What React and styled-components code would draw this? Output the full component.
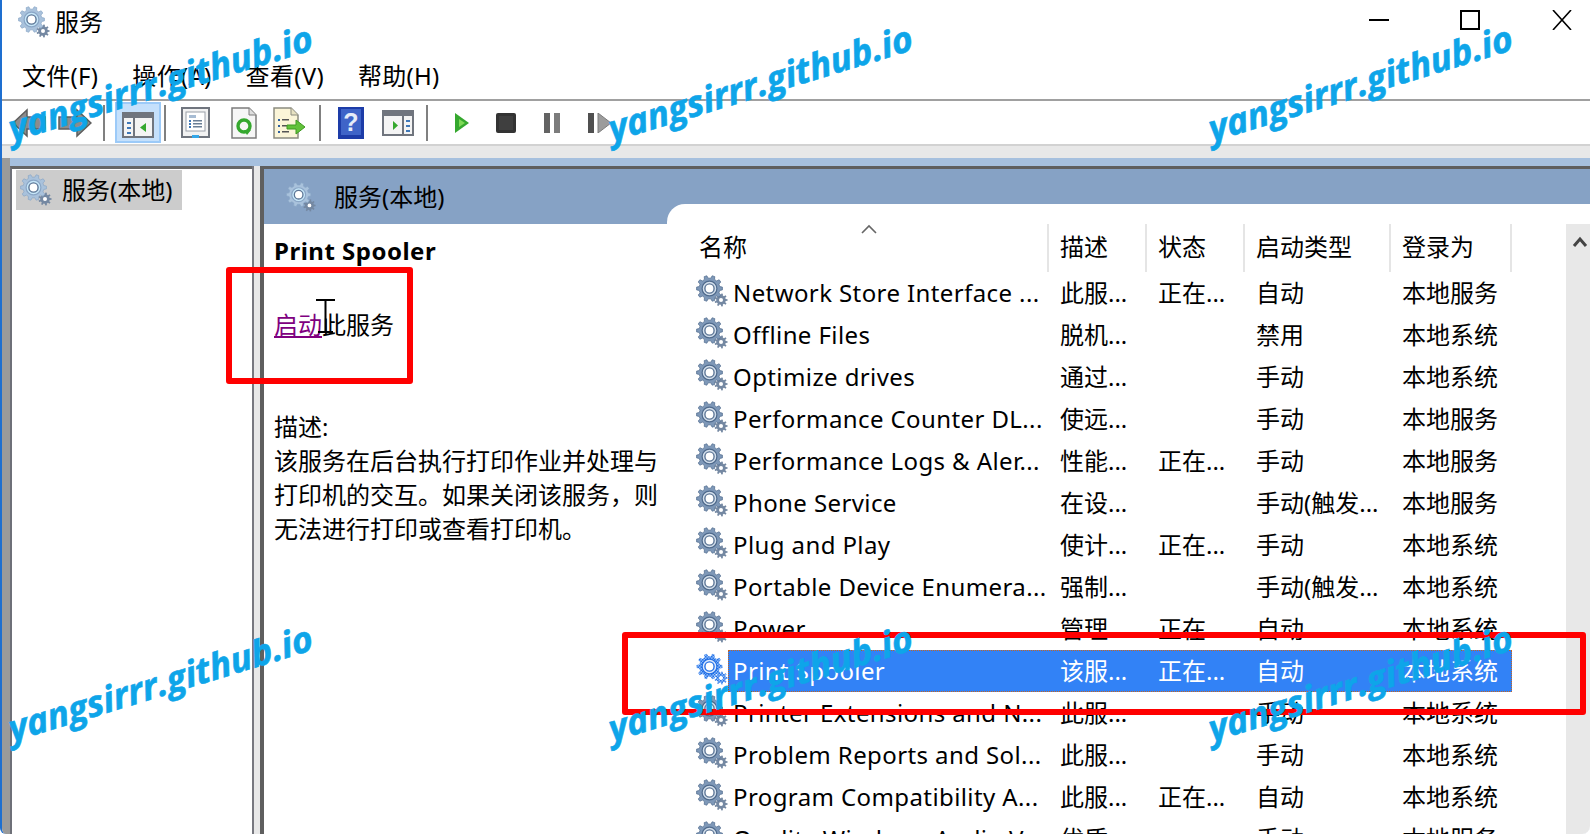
import styled, { createGlobalStyle } from "styled-components"

const GlobalStyle = createGlobalStyle`
    html, body {
        margin: 0;
        padding: 0;
        background: #ffffff;
    }
    body {
        font-family: "Noto Sans", "Noto Sans CJK SC", sans-serif;
        font-size: 24px;
        color: #000000;
    }
`

const rows = [
    ["Network Store Interface ...", "此服...", "正在...", "自动", "本地服务"],
    ["Offline Files", "脱机...", "", "禁用", "本地系统"],
    ["Optimize drives", "通过...", "", "手动", "本地系统"],
    ["Performance Counter DL...", "使远...", "", "手动", "本地服务"],
    ["Performance Logs & Aler...", "性能...", "正在...", "手动", "本地服务"],
    ["Phone Service", "在设...", "", "手动(触发...", "本地服务"],
    ["Plug and Play", "使计...", "正在...", "手动", "本地系统"],
    ["Portable Device Enumera...", "强制...", "", "手动(触发...", "本地系统"],
    ["Power", "管理...", "正在...", "自动", "本地系统"],
    ["Print Spooler", "该服...", "正在...", "自动", "本地系统"],
    ["Printer Extensions and N...", "此服...", "", "手动", "本地系统"],
    ["Problem Reports and Sol...", "此服...", "", "手动", "本地系统"],
    ["Program Compatibility A...", "此服...", "正在...", "自动", "本地系统"],
    ["Quality Windows Audio V...", "优质...", "", "手动", "本地服务"],
]

function gearPath(cx, cy, rOut, rIn, teeth) {
    const step = (Math.PI * 2) / teeth
    let d = ""
    for (let i = 0; i < teeth; i++) {
        const a = i * step
        const pts = [
            [rIn, a - step * 0.3],
            [rOut, a - step * 0.17],
            [rOut, a + step * 0.17],
            [rIn, a + step * 0.3],
        ]
        pts.forEach(([r, t], k) => {
            const x = (cx + r * Math.cos(t)).toFixed(2)
            const y = (cy + r * Math.sin(t)).toFixed(2)
            d += `${i === 0 && k === 0 ? "M" : "L"}${x} ${y} `
        })
    }
    return d + "Z"
}

function Gear({ size = 32, selected, light }) {
    const big = selected ? "url(#dither)" : light ? "#a9c2dc" : "#7e98b8"
    const edge = light ? "#8aa6c6" : "#4f6a8c"
    const ring = light ? "#c6e6f8" : "#d3dfec"
    const small = selected ? "url(#dither)" : "#7488a2"
    return (
        <svg width={size} height={size} viewBox="0 0 32 32">
            <defs>
                <pattern id="dither" width="3" height="3" patternUnits="userSpaceOnUse">
                    <rect width="3" height="3" fill="#8fbcf8" />
                    <rect width="1.5" height="1.5" fill="#2370e6" />
                    <rect x="1.5" y="1.5" width="1.5" height="1.5" fill="#2370e6" />
                </pattern>
            </defs>
            <path d={gearPath(25, 25, 6.6, 4.8, 9)} fill={small} />
            <circle cx="25" cy="25" r="2" fill="#ffffff" />
            <path d={gearPath(13.5, 13.5, 13, 10.4, 10)} fill={big} stroke={selected ? "none" : edge} strokeWidth="0.7" />
            <circle cx="13.5" cy="13.5" r="7.4" fill={selected ? "#dbe9fd" : ring} stroke={selected ? "#2370e6" : edge} strokeWidth="1.2" />
            <circle cx="13.5" cy="13.5" r="4.6" fill="#ffffff" stroke={selected ? "#2370e6" : "#5d7696"} strokeWidth="1.4" />
        </svg>
    )
}

function NavArrow({ flip }) {
    return (
        <svg width="34" height="30" viewBox="0 0 34 30" style={flip ? { transform: "scaleX(-1)" } : undefined}>
            <path d="M1 15 L15 2 V9 H33 V21 H15 V28 Z" fill="#8c8c8c" stroke="#5e5e5e" strokeWidth="1.5" />
        </svg>
    )
}

function PaneIcon({ flip }) {
    return (
        <svg width="32" height="26" viewBox="0 0 32 26">
            <rect x="1" y="1" width="30" height="24" fill="#f4f4f4" stroke="#70757e" strokeWidth="2" />
            <rect x="1" y="1" width="30" height="5" fill="#70757e" />
            <rect x={flip ? 20 : 11} y="6" width="2" height="18" fill="#70757e" />
            {[10, 15, 20].map((y) => (
                <rect key={y} x={flip ? 24 : 5} y={y} width="4" height="2" fill="#3f78b8" />
            ))}
            <path d={flip ? "M11 11 L16 15.5 L11 20 Z" : "M24 11 L18 15.5 L24 20 Z"} fill="#35a82e" />
        </svg>
    )
}

function PropertiesIcon() {
    return (
        <svg width="29" height="32" viewBox="0 0 29 32">
            <rect x="1" y="1" width="27" height="29" fill="#f2f2f2" stroke="#70757e" strokeWidth="2" />
            <rect x="5" y="5" width="19" height="19" fill="#ffffff" stroke="#9a9fa8" />
            <rect x="8" y="8" width="7" height="3" fill="#a7bcd3" />
            {[13, 16, 19].map((y) => (
                <g key={y}>
                    <rect x="8" y={y} width="2" height="2" fill="#3f78b8" />
                    <rect x="12" y={y} width="9" height="1.5" fill="#6a7f96" />
                </g>
            ))}
            <rect x="11" y="28" width="7" height="3" fill="#35a7e8" />
        </svg>
    )
}

function RefreshIcon() {
    return (
        <svg width="26" height="32" viewBox="0 0 26 32">
            <path d="M1 1 H18 L25 8 V31 H1 Z" fill="#f6f6f6" stroke="#7c7c7c" strokeWidth="1.5" />
            <path d="M18 1 V8 H25" fill="#dedede" stroke="#7c7c7c" />
            <circle cx="13" cy="19" r="6" fill="none" stroke="#35a82e" strokeWidth="3.4" />
            <path d="M13 23 L20 23 L16 28 Z" fill="#35a82e" />
        </svg>
    )
}

function ExportIcon() {
    return (
        <svg width="33" height="32" viewBox="0 0 33 32">
            <path d="M1 1 H18 L25 8 V31 H1 Z" fill="#fbf5d8" stroke="#8c8c80" strokeWidth="1.5" />
            <path d="M18 1 V8 H25" fill="#e8e2c2" stroke="#8c8c80" />
            {[12, 18, 24].map((y) => (
                <g key={y}>
                    <rect x="5" y={y} width="2" height="2" fill="#2f5f9e" />
                    <rect x="9" y={y} width="7" height="1.5" fill="#555555" />
                </g>
            ))}
            <path d="M14 18 H23 V13 L32 20 L23 27 V22 H14 Z" fill="#62c23a" stroke="#3f9a22" />
        </svg>
    )
}

function HelpIcon() {
    return (
        <svg width="26" height="32" viewBox="0 0 26 32">
            <rect width="26" height="32" fill="#1d3ca8" />
            <rect x="3" y="2" width="20" height="26" fill="#3f64c8" />
            <text x="13" y="24" textAnchor="middle" fontFamily="Liberation Sans" fontWeight="700" fontSize="25" fill="#e6ecf8">?</text>
        </svg>
    )
}

function PlayIcon() {
    return (
        <svg width="14" height="20" viewBox="0 0 14 20">
            <path d="M0 0 L14 10 L0 20 Z" fill="#35a82e" />
            <path d="M4 6 L10 10 L4 14 Z" fill="#7ed957" />
        </svg>
    )
}

function StopIcon() {
    return (
        <svg width="20" height="20" viewBox="0 0 20 20">
            <rect width="20" height="20" rx="2" fill="#333333" />
            <rect x="3" y="3" width="14" height="14" fill="#3f3f3f" />
        </svg>
    )
}

function PauseIcon() {
    return (
        <svg width="16" height="20" viewBox="0 0 16 20">
            <rect width="6" height="20" fill="#636363" />
            <rect x="10" width="6" height="20" fill="#7c7c7c" />
        </svg>
    )
}

function ResumeIcon() {
    return (
        <svg width="23" height="20" viewBox="0 0 23 20">
            <rect width="6" height="20" fill="#505050" />
            <path d="M10 0 L23 10 L10 20 Z" fill="#9c9c9c" stroke="#7c7c7c" />
        </svg>
    )
}

function Cursor() {
    return (
        <svg width="19" height="34" viewBox="0 0 19 34">
            <path d="M0 1 H19 M9.5 1 V33 M2 33 H17" fill="none" stroke="#000000" strokeWidth="2" />
        </svg>
    )
}

export default function App() {
    return (
        <>
            <GlobalStyle />
            <Win>
                <TitleBar>
                    <TitleIcon>
                        <Gear size={24} light />
                    </TitleIcon>
                    <TitleText>服务</TitleText>
                    <WinButtons>
                        <Minimize />
                        <Maximize />
                        <CloseButton>
                            <svg width="20" height="20" viewBox="0 0 20 20">
                                <path d="M1 0 L19 20 M19 0 L1 20" stroke="#000000" strokeWidth="1.6" />
                            </svg>
                        </CloseButton>
                    </WinButtons>
                </TitleBar>
                <MenuBar>
                    <MenuItem>文件(F)</MenuItem>
                    <MenuItem>操作(A)</MenuItem>
                    <MenuItem>查看(V)</MenuItem>
                    <MenuItem>帮助(H)</MenuItem>
                </MenuBar>
                <ToolBar>
                    <Tool $gap={10}><NavArrow /></Tool>
                    <Tool $gap={12}><NavArrow flip /></Tool>
                    <ToolSep $gap={11} />
                    <ActiveTool><PaneIcon /></ActiveTool>
                    <ToolSep $gap={3} />
                    <Tool $gap={15}><PropertiesIcon /></Tool>
                    <Tool $gap={21}><RefreshIcon /></Tool>
                    <Tool $gap={16}><ExportIcon /></Tool>
                    <ToolSep $gap={13} />
                    <Tool $gap={17}><HelpIcon /></Tool>
                    <Tool $gap={18}><PaneIcon flip /></Tool>
                    <ToolSep $gap={12} />
                    <Tool $gap={27}><PlayIcon /></Tool>
                    <Tool $gap={27}><StopIcon /></Tool>
                    <Tool $gap={28}><PauseIcon /></Tool>
                    <Tool $gap={28}><ResumeIcon /></Tool>
                </ToolBar>
                <GreyBand />
                <Workspace>
                    <TreePane>
                        <TreeItem>
                            <Gear size={32} light />
                            <span>服务(本地)</span>
                        </TreeItem>
                    </TreePane>
                    <Splitter />
                    <ServicesPane>
                        <DetailColumn>
                            <Banner>
                                <Gear size={30} light />
                                <span>服务(本地)</span>
                            </Banner>
                            <Details>
                                <ServiceName>Print Spooler</ServiceName>
                                <ActionLine>
                                    <StartLink>启动</StartLink>此服务
                                </ActionLine>
                                <Description>
                                    描述:
                                    <br />
                                    该服务在后台执行打印作业并处理与
                                    <br />
                                    打印机的交互。如果关闭该服务，则
                                    <br />
                                    无法进行打印或查看打印机。
                                </Description>
                            </Details>
                        </DetailColumn>
                        <ListColumn>
                            <ListCard>
                                <ListTable>
                                    <HeaderRow>
                                        <NameHeader>
                                            名称
                                            <SortCaret>
                                                <svg width="16" height="10" viewBox="0 0 16 10">
                                                    <path d="M1 9 L8 2 L15 9" fill="none" stroke="#666666" strokeWidth="1.6" />
                                                </svg>
                                            </SortCaret>
                                        </NameHeader>
                                        <HeaderCell>描述</HeaderCell>
                                        <HeaderCell>状态</HeaderCell>
                                        <HeaderCell>启动类型</HeaderCell>
                                        <HeaderCell>登录为</HeaderCell>
                                    </HeaderRow>
                                    {rows.map((row) => {
                                        const selected = row[0] === "Print Spooler"
                                        return (
                                            <Row key={row[0]}>
                                                <RowIcon>
                                                    <Gear selected={selected} />
                                                </RowIcon>
                                                <RowBody $selected={selected}>
                                                    {row.map((text, i) => (
                                                        <Cell key={i} $first={i === 0}>{text}</Cell>
                                                    ))}
                                                </RowBody>
                                            </Row>
                                        )
                                    })}
                                </ListTable>
                                <ScrollTrack>
                                    <svg width="16" height="12" viewBox="0 0 16 12">
                                        <path d="M2 10 L8 3 L14 10" fill="none" stroke="#444444" strokeWidth="3" />
                                    </svg>
                                </ScrollTrack>
                            </ListCard>
                        </ListColumn>
                    </ServicesPane>
                </Workspace>

                <IBeam><Cursor /></IBeam>
                <RedBox $left={226} $top={267} $width={187} $height={117} />
                <RedBox $left={622} $top={632} $width={964} $height={83} />
                <WatermarkLayer>
                    {[0, 1, 2, 3, 4, 5].map((n) => (
                        <Watermark key={n}>
                            <span>yangsirrr.github.io</span>
                        </Watermark>
                    ))}
                </WatermarkLayer>
            </Win>
        </>
    )
}

const Win = styled.div`
    position: relative;
    box-sizing: border-box;
    width: 1590px;
    height: 834px;
    overflow: hidden;
    display: flex;
    flex-direction: column;
    background: #ffffff;
    border-left: 2px solid #1e6fd0;
    border-bottom-left-radius: 6px;
    border-bottom-right-radius: 8px;
`

const TitleBar = styled.div`
    height: 44px;
    display: flex;
    align-items: center;
    padding-left: 16px;
    flex-shrink: 0;
`

const TitleIcon = styled.div`
    width: 32px;
    height: 32px;
    display: flex;
    align-items: center;
    justify-content: center;
    svg {
        width: 32px;
        height: 32px;
    }
`

const TitleText = styled.span`
    margin: -4px 0 0 5px;
`

const WinButtons = styled.div`
    margin-left: auto;
    display: flex;
    align-items: flex-start;
    height: 100%;
    padding-top: 10px;
    box-sizing: border-box;
    padding-right: 18px;
`

const Minimize = styled.div`
    width: 20px;
    height: 2px;
    background: #000000;
    margin-top: 9px;
`

const Maximize = styled.div`
    box-sizing: border-box;
    width: 20px;
    height: 20px;
    border: 2px solid #000000;
    margin-left: 71px;
`

const CloseButton = styled.div`
    width: 20px;
    height: 20px;
    margin-left: 72px;
    svg {
        display: block;
    }
`

const MenuBar = styled.div`
    height: 55px;
    box-sizing: border-box;
    display: flex;
    align-items: center;
    gap: 34px;
    padding: 8px 0 0 20px;
    flex-shrink: 0;
`

const MenuItem = styled.span`
    line-height: 34px;
    letter-spacing: 0.3px;
`

const ToolBar = styled.div`
    height: 47px;
    box-sizing: border-box;
    border-top: 2px solid #a0a0a0;
    border-bottom: 2px solid #d2d2d2;
    display: flex;
    align-items: center;
    flex-shrink: 0;
`

const Tool = styled.div`
    margin-left: ${(p) => p.$gap}px;
    display: flex;
    align-items: center;
    svg {
        display: block;
    }
`

const ActiveTool = styled.div`
    box-sizing: border-box;
    width: 46px;
    height: 41px;
    margin-left: 10px;
    display: flex;
    align-items: center;
    justify-content: center;
    background: #c5e0fb;
    border: 2px solid #9ccaf8;
    padding-top: 4px;
`

const ToolSep = styled.div`
    width: 2px;
    height: 36px;
    margin-left: ${(p) => p.$gap}px;
    background: #808080;
`

const GreyBand = styled.div`
    height: 12px;
    background: #e8e8e8;
    flex-shrink: 0;
`

const Workspace = styled.div`
    flex: 1;
    min-height: 0;
    display: flex;
    box-sizing: border-box;
    padding-top: 8px;
    background: #a6c0de;
    border-left: 8px solid #9a9a9a;
`

const TreePane = styled.div`
    box-sizing: border-box;
    width: 242px;
    padding: 1px 0 0 4px;
    background: #ffffff;
    border-left: 2px solid #6e7078;
    border-top: 3px solid #666666;
`

const TreeItem = styled.div`
    display: flex;
    align-items: center;
    gap: 10px;
    width: 166px;
    height: 40px;
    padding-left: 4px;
    box-sizing: border-box;
    background: #cccccc;
    span {
        margin-top: -4px;
    }
`

const Splitter = styled.div`
    box-sizing: border-box;
    width: 12px;
    background: #e8e8e8;
    border-left: 2px solid #77787f;
    border-right: 4px solid #5f5f5f;
`

const ServicesPane = styled.div`
    flex: 1;
    min-width: 0;
    display: grid;
    grid-template-columns: 403px 1fr;
    border-top: 3px solid #5f5f5f;
    background: #ffffff;
`

const DetailColumn = styled.div`
    display: flex;
    flex-direction: column;
`

const Banner = styled.div`
    height: 55px;
    box-sizing: border-box;
    display: flex;
    align-items: flex-start;
    gap: 18px;
    padding: 11px 0 0 22px;
    background: #86a2c5;
    line-height: 34px;
    svg {
        margin-top: 2px;
        flex-shrink: 0;
    }
`

const Details = styled.div`
    padding: 10px 0 0 10px;
`

const ServiceName = styled.div`
    font-weight: 700;
    line-height: 34px;
    letter-spacing: 0.5px;
`

const ActionLine = styled.div`
    margin-top: 40px;
    line-height: 34px;
`

const StartLink = styled.span`
    color: #800080;
    text-decoration: underline;
`

const Description = styled.div`
    margin-top: 68px;
    line-height: 34px;
`

const ListColumn = styled.div`
    box-sizing: border-box;
    padding-top: 35px;
    min-height: 0;
    background: linear-gradient(#86a2c5 55px, #ffffff 55px);
`

const ListCard = styled.div`
    height: 100%;
    box-sizing: border-box;
    display: flex;
    padding-top: 20px;
    background: #ffffff;
    border-top-left-radius: 18px;
`

const ListTable = styled.div`
    width: 899px;
    flex-shrink: 0;
`

const HeaderRow = styled.div`
    display: grid;
    grid-template-columns: 380px 98px 98px 146px 123px;
    height: 48px;
`

const HeaderCell = styled.div`
    position: relative;
    box-sizing: border-box;
    border-left: 2px solid #e5e5e5;
    padding: 6px 0 0 11px;
    line-height: 34px;
    &:last-child {
        border-right: 2px solid #e5e5e5;
    }
`

const NameHeader = styled(HeaderCell)`
    border-left: none;
    padding-left: 32px;
`

const SortCaret = styled.span`
    position: absolute;
    left: 194px;
    top: 0;
    line-height: 0;
`

const Row = styled.div`
    display: flex;
    height: 42px;
`

const RowIcon = styled.div`
    width: 61px;
    box-sizing: border-box;
    padding: 3px 0 0 29px;
    flex-shrink: 0;
    svg {
        display: block;
    }
`

const RowBody = styled.div`
    width: 784px;
    box-sizing: border-box;
    display: grid;
    grid-template-columns: 319px 98px 98px 146px 123px;
    align-items: center;
    white-space: nowrap;
    color: ${(p) => (p.$selected ? "#ffffff" : "#000000")};
    background: ${(p) => (p.$selected ? "#3282f6" : "transparent")};
    outline: ${(p) => (p.$selected ? "1px dotted #c8641e" : "none")};
    outline-offset: -1px;
`

const Cell = styled.div`
    padding-left: ${(p) => (p.$first ? 5 : 13)}px;
    letter-spacing: ${(p) => (p.$first ? "0.4px" : "0")};
    line-height: 34px;
`

const ScrollTrack = styled.div`
    flex: 1;
    background: #e8e8e8;
    padding: 12px 0 0 6px;
    svg {
        display: block;
    }
`

const IBeam = styled.div`
    position: absolute;
    left: 314px;
    top: 299px;
    line-height: 0;
`

const RedBox = styled.div`
    position: absolute;
    box-sizing: border-box;
    left: ${(p) => p.$left - 2}px;
    top: ${(p) => p.$top}px;
    width: ${(p) => p.$width}px;
    height: ${(p) => p.$height}px;
    border: 6px solid #ff0000;
    border-radius: 3px;
`

const WatermarkLayer = styled.div`
    position: absolute;
    left: -142px;
    top: -218px;
    display: grid;
    grid-template-columns: repeat(3, 600px);
    grid-template-rows: repeat(2, 600px);
    pointer-events: none;
`

const Watermark = styled.div`
    display: flex;
    align-items: center;
    justify-content: center;
    span {
        transform: rotate(-17deg) skewX(-4deg);
        font-family: "Open Sans", sans-serif;
        font-weight: 700;
        font-style: italic;
        font-size: 36px;
        color: #0ea5e9;
        -webkit-text-stroke: 0.6px #0ea5e9;
        white-space: nowrap;
    }
`
